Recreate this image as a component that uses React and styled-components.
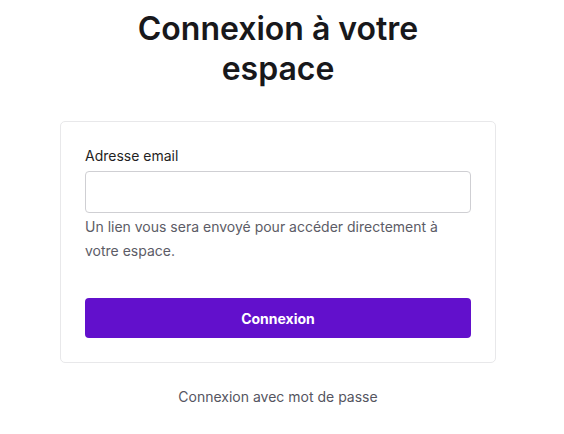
import React from "react";
import styled, { createGlobalStyle } from "styled-components";

const GlobalStyle = createGlobalStyle`
  body {
    margin: 0;
    background: #ffffff;
    font-family: Inter, "Noto Sans", Arial, sans-serif;
  }
`;

const Page = styled.main`
  display: flex;
  flex-direction: column;
  align-items: center;
  padding: 9px 8px 0 0;
`;

const Title = styled.h1`
  margin: 0 0 32px;
  width: 340px;
  font-size: 32px;
  line-height: 40px;
  font-weight: 600;
  color: #18181b;
  text-align: center;
`;

const Card = styled.form`
  width: 436px;
  box-sizing: border-box;
  padding: 24px;
  border: 1px solid #e8e8ea;
  border-radius: 5px;
  background: #fff;
  display: flex;
  flex-direction: column;
`;

const Label = styled.label`
  font-size: 14px;
  line-height: 20px;
  color: #1f1f23;
  margin-bottom: 5px;
`;

const Input = styled.input`
  height: 42px;
  box-sizing: border-box;
  border: 1px solid #cfcfd3;
  border-radius: 4px;
  padding: 0 12px;
  font: inherit;
  font-size: 14px;
  outline: none;
`;

const Hint = styled.p`
  margin: 2px 0 0;
  font-size: 14px;
  line-height: 24px;
  color: #5c5c66;
`;

const Button = styled.button`
  margin-top: 35px;
  height: 40px;
  border: none;
  border-radius: 4px;
  background: #6210cc;
  color: #fff;
  font-family: inherit;
  font-size: 14px;
  font-weight: 700;
  cursor: pointer;
`;

const SecondaryLink = styled.a`
  margin-top: 22px;
  font-size: 14px;
  line-height: 24px;
  color: #55555f;
  text-decoration: none;
  cursor: pointer;
`;

export default function App() {
  return (
    <>
      <GlobalStyle />
      <Page>
        <Title>Connexion à votre espace</Title>
        <Card onSubmit={(e) => e.preventDefault()}>
          <Label htmlFor="email">Adresse email</Label>
          <Input id="email" type="email" />
          <Hint>
            Un lien vous sera envoyé pour accéder directement à votre espace.
          </Hint>
          <Button type="submit">Connexion</Button>
        </Card>
        <SecondaryLink>Connexion avec mot de passe</SecondaryLink>
      </Page>
    </>
  );
}
